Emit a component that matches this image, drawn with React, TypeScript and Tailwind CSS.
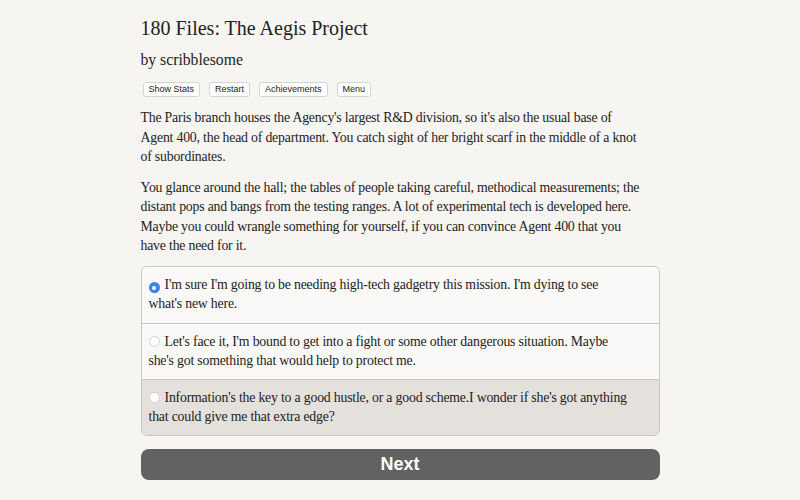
const serif = "font-['Liberation_Serif',serif]";

const choices = [
  {
    lines: ["I'm sure I'm going to be needing high-tech gadgetry this mission. I'm dying to see", "what's new here."],
    selected: true,
  },
  {
    lines: ["Let's face it, I'm bound to get into a fight or some other dangerous situation. Maybe", "she's got something that would help to protect me."],
    selected: false,
  },
  {
    lines: ["Information's the key to a good hustle, or a good scheme.I wonder if she's got anything", "that could give me that extra edge?"],
    selected: false,
    hover: true,
  },
];

function Radio({ on }: { on: boolean }) {
  if (on) {
    return (
      <span className="mr-[5px] inline-flex h-[11px] w-[11px] translate-y-[1px] items-center justify-center rounded-full bg-[#3b82f0]">
        <span className="h-[4px] w-[4px] rounded-full bg-white" />
      </span>
    );
  }
  return <span className="mr-[5px] inline-block h-[11px] w-[11px] translate-y-[1px] rounded-full border border-[#d4d2ce] bg-white" />;
}

export default function App() {
  return (
    <div className="min-h-[500px] w-full bg-[#f7f5f2] text-[#222]">
      <div className="mx-auto w-[519px] pt-[16px]">
        <h1 className={`${serif} text-[20px] leading-[25px]`}>180 Files: The Aegis Project</h1>
        <h2 className={`${serif} mt-[9px] text-[15.7px] leading-[20px]`}>by scribblesome</h2>
        <div className="mt-[12px] flex gap-[9px] pl-[2px] font-['Liberation_Sans',sans-serif] text-[9px]">
          {["Show Stats", "Restart", "Achievements", "Menu"].map((b) => (
            <span key={b} className="rounded-[3px] border border-[#d6d4d0] bg-white px-[5px] py-[1px] leading-[11px] text-[#222]">
              {b}
            </span>
          ))}
        </div>
        <div className={`${serif} mt-[11px] whitespace-nowrap text-[13.8px] leading-[19.5px] tracking-[-0.2px]`}>
          <p>
            The Paris branch houses the Agency's largest R&amp;D division, so it's also the usual base of
            <br />
            Agent 400, the head of department. You catch sight of her bright scarf in the middle of a knot
            <br />
            of subordinates.
          </p>
          <p className="mt-[11px]">
            You glance around the hall; the tables of people taking careful, methodical measurements; the
            <br />
            distant pops and bangs from the testing ranges. A lot of experimental tech is developed here.
            <br />
            Maybe you could wrangle something for yourself, if you can convince Agent 400 that you
            <br />
            have the need for it.
          </p>
        </div>
        <div className="mt-[10px] overflow-hidden rounded-[6px] border border-[#c9c7c3]">
          {choices.map((c, i) => (
            <div
              key={i}
              className={`${serif} h-[56px] whitespace-nowrap px-[7px] pt-[8px] text-[13.8px] leading-[19.5px] tracking-[-0.2px] ${i > 0 ? "border-t border-[#c9c7c3]" : ""} ${c.hover ? "bg-[#e4e1dd]" : "bg-[#faf9f7]"}`}
            >
              <Radio on={c.selected} />
              {c.lines[0]}
              <br />
              {c.lines[1]}
            </div>
          ))}
        </div>
        <button className="mt-[13px] flex h-[31px] w-full items-center justify-center rounded-[8px] bg-[#626262] font-['Liberation_Sans',sans-serif] text-[18px] font-bold text-white">
          Next
        </button>
      </div>
    </div>
  );
}
